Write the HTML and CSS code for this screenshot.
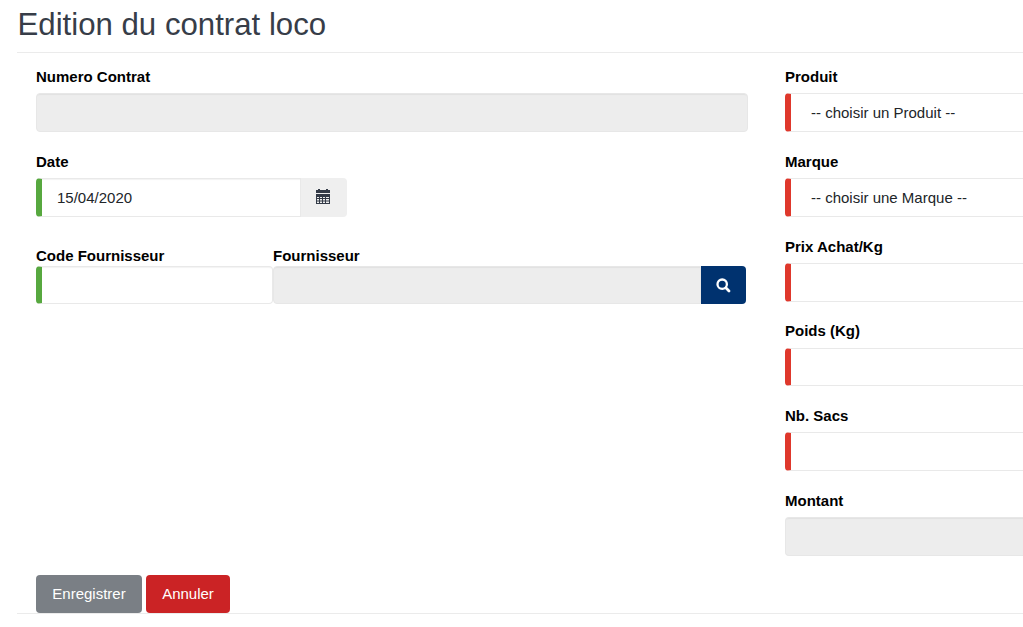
FILE: index.html
```html
<!DOCTYPE html>
<html lang="fr">
<head>
<meta charset="utf-8">
<title>Edition du contrat loco</title>
<link rel="stylesheet" href="styles.css">
</head>
<body>
<main class="page">
  <h1 class="page-title">Edition du contrat loco</h1>
  <form class="form">
    <div class="column column-main">
      <div class="group">
        <label class="label">Numero Contrat</label>
        <div class="control disabled"></div>
      </div>
      <div class="group">
        <label class="label">Date</label>
        <div class="date-group">
          <div class="control valid date">15/04/2020</div>
          <div class="addon">
            <svg width="14" height="15" viewBox="0 0 14 15" fill="#333a47">
              <path d="M0 1h2V0h2v1h6V0h2v1h2v3H0z"/>
              <path fill-rule="evenodd" d="M0 5h14v10H0zM1 8v1h2V8zm3 0v1h2V8zm3 0v1h2V8zm3 0v1h3V8zM1 10v1.500h2V10zm3 0v1.500h2V10zm3 0v1.500h2V10zm3 0v1.500h3V10zM1 12.500V14h2v-1.500zm3 0V14h2v-1.500zm3 0V14h2v-1.500zm3 0V14h3v-1.500z"/>
              <path fill="#efefef" d="M0 4h14v1H0z"/>
            </svg>
          </div>
        </div>
      </div>
      <div class="supplier">
        <div class="supplier-code">
          <label class="label tight">Code Fournisseur</label>
          <div class="control valid"></div>
        </div>
        <div class="supplier-name">
          <label class="label tight">Fournisseur</label>
          <div class="search-group">
            <div class="control disabled"></div>
            <button type="button" class="search" aria-label="Rechercher">
              <svg width="15" height="15" viewBox="0 0 15 15" fill="none" stroke="#fff">
                <circle cx="6.200" cy="6.200" r="4.700" stroke-width="2.300"/>
                <path d="M9.800 9.800l3.200 3.200" stroke-width="2.800" stroke-linecap="round"/>
              </svg>
            </button>
          </div>
        </div>
      </div>
    </div>
    <div class="column column-side">
      <div class="group">
        <label class="label">Produit</label>
        <div class="control required select">-- choisir un Produit --</div>
      </div>
      <div class="group">
        <label class="label">Marque</label>
        <div class="control required select">-- choisir une Marque --</div>
      </div>
      <div class="group">
        <label class="label">Prix Achat/Kg</label>
        <div class="control required"></div>
      </div>
      <div class="group">
        <label class="label">Poids (Kg)</label>
        <div class="control required"></div>
      </div>
      <div class="group">
        <label class="label">Nb. Sacs</label>
        <div class="control required"></div>
      </div>
      <div class="group">
        <label class="label">Montant</label>
        <div class="control disabled"></div>
      </div>
    </div>
  </form>
  <div class="actions">
    <button type="button" class="btn save">Enregistrer</button>
    <button type="button" class="btn cancel">Annuler</button>
  </div>
</main>
</body>
</html>
```

FILE: styles.css
```css
* {
  box-sizing: border-box;
}

body {
  margin: 0;
  background: #fff;
  color: #212529;
  font: 15px/22px "Liberation Sans", Arial, sans-serif;
}

.page {
  margin-left: 17px;
}

.page-title {
  height: 53px;
  margin: 0;
  padding: 6px 0 0 0.500px;
  border-bottom: 1px solid #ebebeb;
  color: #373d48;
  font-size: 31.200px;
  font-weight: 400;
  line-height: 37px;
}

.form {
  display: flex;
  gap: 37px;
  height: 522px;
  padding: 13px 0 0 19px;
}

.column-main {
  flex: none;
  width: 712px;
}

.column-side {
  flex: 1;
}

.group {
  height: 84.750px;
}

.label {
  display: block;
  height: 27.300px;
  color: #000;
  font-weight: 700;
}

.label.tight {
  height: 21px;
}

.control {
  height: 38.800px;
  padding: 0 15px;
  border: 1px solid #e9e9e9;
  border-radius: 4px;
  box-shadow: inset 0 2px 1px -1px rgba(0, 0, 0, 0.05);
  line-height: 37px;
}

.control.disabled {
  border-color: #e7e7e7;
  background: #ededed;
}

.control.valid {
  border-left: 6px solid #57a83f;
}

.control.required {
  border-left: 6px solid #df382c;
  box-shadow: none;
}

.control.select {
  padding-left: 20px;
}

.column-side .control {
  border-right: 0;
  border-top-right-radius: 0;
  border-bottom-right-radius: 0;
}

.date-group,
.search-group {
  display: flex;
}

.date {
  width: 265px;
  border-radius: 4px 0 0 4px;
}

.addon {
  display: flex;
  align-items: center;
  width: 46px;
  height: 38.800px;
  padding: 0 0 2px 15px;
  border-radius: 0 4px 4px 0;
  background: #efefef;
}

.supplier {
  display: flex;
  padding-top: 9.500px;
}

.supplier-code {
  width: 237px;
}

.supplier-name {
  width: 473px;
}

.supplier .control {
  height: 38px;
}

.search-group .control {
  flex: 1;
  border-radius: 4px 0 0 4px;
}

.search {
  display: flex;
  align-items: center;
  justify-content: center;
  width: 45px;
  height: 38px;
  padding: 0;
  border: 0;
  border-radius: 0 4px 4px 0;
  background: #00326f;
}

.actions {
  display: flex;
  gap: 4px;
  height: 39px;
  padding-left: 19px;
  border-bottom: 1px solid #ebebeb;
}

.btn {
  height: 38px;
  padding: 0;
  border: 0;
  border-radius: 4px;
  color: #fff;
  font: inherit;
}

.save {
  width: 106px;
  background: #7a7f85;
}

.cancel {
  width: 84px;
  background: #cb2325;
}
```
